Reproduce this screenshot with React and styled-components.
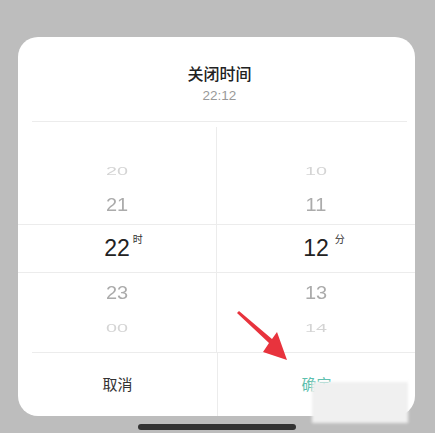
import React from 'react';
import styled, { createGlobalStyle } from 'styled-components';

const GlobalStyle = createGlobalStyle`
  html, body {
    margin: 0;
    padding: 0;
    background: #bdbdbd;
    font-family: "Noto Sans", "Noto Sans CJK SC", sans-serif;
  }
`;

const Screen = styled.div`
  position: relative;
  width: 435px;
  height: 433px;
  padding: 37px 20px 0 18px;
  box-sizing: border-box;
  overflow: hidden;
`;

const Sheet = styled.div`
  width: 397px;
  height: 379px;
  background: #fff;
  border-radius: 20px;
  display: flex;
  flex-direction: column;
  overflow: hidden;
`;

const Header = styled.div`
  height: 85px;
  margin: 0 8px 0 14px;
  border-bottom: 1px solid #ececec;
  display: flex;
  flex-direction: column;
  align-items: center;
  padding-top: 24px;
  box-sizing: border-box;
`;

const Title = styled.div`
  font-size: 16px;
  font-weight: 500;
  color: #222;
  line-height: 24px;
  font-family: "Noto Sans CJK SC", sans-serif;
`;

const Subtitle = styled.div`
  font-size: 13.5px;
  color: #999;
  line-height: 20px;
  margin-top: 1px;
  font-family: "Liberation Sans", Arial, sans-serif;
`;

const Picker = styled.div`
  position: relative;
  height: 230px;
  display: flex;
  padding-top: 33px;
  box-sizing: border-box;
`;

const Band = styled.div`
  position: absolute;
  left: 0;
  right: 0;
  top: 102px;
  height: 49px;
  border-top: 1px solid #ececec;
  border-bottom: 1px solid #ececec;
  box-sizing: border-box;
  pointer-events: none;
`;

const Column = styled.div`
  flex: 1;
  display: flex;
  flex-direction: column;
  align-items: center;
  border-left: ${({ $divider }) => ($divider ? '1px solid #ececec' : 'none')};
  margin-top: ${({ $divider }) => ($divider ? '-28px' : '0')};
  padding-top: ${({ $divider }) => ($divider ? '28px' : '0')};
`;

const Row = styled.div`
  height: ${({ $h }) => $h}px;
  display: flex;
  align-items: center;
  justify-content: center;
  font-family: "Liberation Sans", Arial, sans-serif;
`;

const Faded = styled.span`
  font-size: 18px;
  color: #cdcdcd;
  display: inline-block;
  transform: scale(1.1, 0.6);
  opacity: 0.85;
`;

const Near = styled.span`
  font-size: 20px;
  color: #ababab;
  transform: scaleY(0.92);
  display: inline-block;
`;

const Selected = styled.span`
  position: relative;
  font-size: 23px;
  color: #222;
`;

const Unit = styled.sup`
  position: absolute;
  left: 100%;
  top: -4px;
  margin-left: ${({ $gap }) => $gap}px;
  font-size: 10px;
  color: #333;
  font-family: "Noto Sans CJK SC", sans-serif;
  white-space: nowrap;
`;

const Footer = styled.div`
  flex: 1;
  display: flex;
  margin-left: 14px;
  border-top: 1px solid #ececec;
`;

const Action = styled.div`
  box-sizing: border-box;
  flex: ${({ $primary }) => ($primary ? '1' : '0 0 185px')};
  display: flex;
  align-items: center;
  justify-content: center;
  font-size: 15px;
  color: ${({ $primary }) => ($primary ? '#5cbfae' : '#333')};
  border-left: ${({ $primary }) => ($primary ? '1px solid #ececec' : 'none')};
  padding-right: ${({ $pad }) => $pad || 0}px;
  padding-bottom: 2px;
  font-family: "Noto Sans CJK SC", sans-serif;
`;

const Blur = styled.div`
  position: absolute;
  left: 312px;
  top: 382px;
  width: 96px;
  height: 41px;
  background: #f0f0f0;
  filter: blur(1.5px);
`;

const Arrow = styled.svg`
  position: absolute;
  left: 230px;
  top: 305px;
`;

const HomeBar = styled.div`
  position: absolute;
  left: 138px;
  top: 424px;
  width: 158px;
  height: 6px;
  border-radius: 3px;
  background: #333;
`;

const hours = { top: '20', near: '21', sel: '22', below: '23', bottom: '00' };
const mins = { top: '10', near: '11', sel: '12', below: '13', bottom: '14' };

function Wheel({ data, unit, divider, gap }) {
  return (
    <Column $divider={divider}>
      <Row $h={32}><Faded>{data.top}</Faded></Row>
      <Row $h={37}><Near>{data.near}</Near></Row>
      <Row $h={49}>
        <Selected>
          {data.sel}
          <Unit $gap={gap}>{unit}</Unit>
        </Selected>
      </Row>
      <Row $h={40}><Near>{data.below}</Near></Row>
      <Row $h={30}><Faded>{data.bottom}</Faded></Row>
    </Column>
  );
}

export default function App() {
  return (
    <>
      <GlobalStyle />
      <Screen>
        <Sheet>
          <Header>
            <Title>关闭时间</Title>
            <Subtitle>22:12</Subtitle>
          </Header>
          <Picker>
            <Band />
            <Wheel data={hours} unit="时" gap={3} />
            <Wheel data={mins} unit="分" divider gap={6} />
          </Picker>
          <Footer>
            <Action $pad={14}>取消</Action>
            <Action $primary>确定</Action>
          </Footer>
        </Sheet>
        <Blur />
        <Arrow width="70" height="65" viewBox="0 0 70 65">
          <polygon points="7,8 9,6 42,34 47,27 57,55 33,47 39,38" fill="#e8333d" />
        </Arrow>
        <HomeBar />
      </Screen>
    </>
  );
}
